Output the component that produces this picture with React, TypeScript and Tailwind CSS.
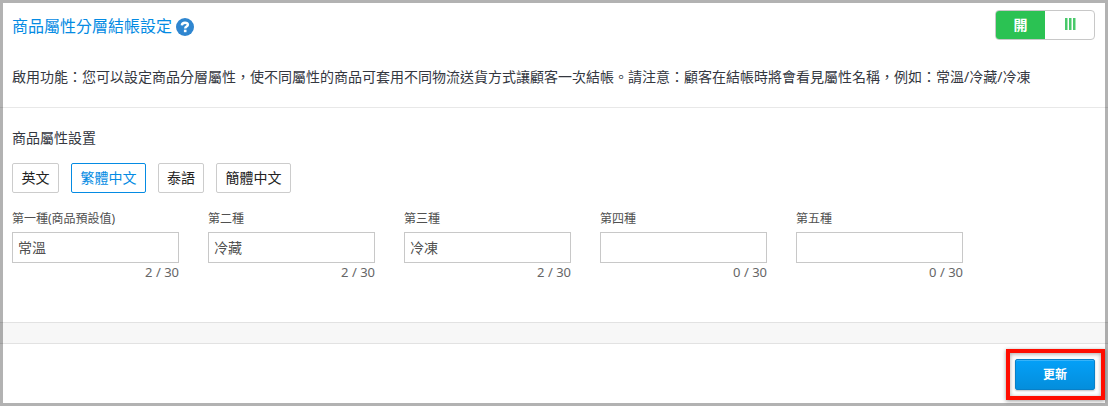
const languages = [
  { label: "英文", width: "w-[47px]" },
  { label: "繁體中文", width: "w-[75px]", active: true },
  { label: "泰語", width: "w-[46px]" },
  { label: "簡體中文", width: "w-[75px]" },
]

const attributes = [
  { label: "第一種(商品預設值)", value: "常溫" },
  { label: "第二種", value: "冷藏" },
  { label: "第三種", value: "冷凍" },
  { label: "第四種", value: "" },
  { label: "第五種", value: "" },
]

function HelpIcon() {
  return (
    <svg className="w-[18px] h-[18px]" viewBox="0 0 18 18" fill="none">
      <circle cx="9" cy="9" r="9" fill="#2f86d0" />
      <path d="M5.8 7.3C6 5.4 7.2 4.7 9 4.7C10.9 4.7 11.9 5.5 11.9 6.8C11.9 8.7 9.2 8.5 9.2 10.5" stroke="#fff" strokeWidth="2.4" />
      <rect x="7.9" y="11.7" width="2.6" height="2.5" fill="#fff" />
    </svg>
  )
}

function Toggle() {
  return (
    <button className="flex w-[100px] h-[30px] rounded-[4px] border border-[#c8c8c8] overflow-hidden">
      <span className="w-[49px] h-full bg-[#2bc253] text-white text-[14px] font-bold leading-[28px] text-center">開</span>
      <span className="flex-1 h-full flex items-center justify-center gap-px pl-px pb-[3px]">
        <span className="w-[3px] h-3 bg-[#48c96a] border-r border-[#a5e4b5]" />
        <span className="w-[3px] h-3 bg-[#48c96a] border-r border-[#a5e4b5]" />
        <span className="w-[3px] h-3 bg-[#48c96a] border-r border-[#a5e4b5]" />
      </span>
    </button>
  )
}

export default function App() {
  return (
    <div
      lang="zh-Hant"
      className="relative w-[1108px] h-[406px] flex flex-col overflow-hidden bg-white text-[14px] text-[#34373f] font-['Noto_Sans','Noto_Sans_CJK_TC',sans-serif]"
    >
      {/* Header */}
      <section className="h-[108px] shrink-0 border-b border-[#e8e8e8] px-3 pt-[10px]">
        <div className="flex justify-between pr-px">
          <h2 className="flex items-center gap-1 h-[34px] text-[16px] text-[#048be3]">
            <span className="leading-[32px] pb-[2px]">商品屬性分層結帳設定</span>
            <HelpIcon />
          </h2>
          <Toggle />
        </div>
        <p className="mt-[23px] leading-5 whitespace-nowrap">
          啟用功能：您可以設定商品分層屬性，使不同屬性的商品可套用不同物流送貨方式讓顧客一次結帳。請注意：顧客在結帳時將會看見屬性名稱，例如：常溫/冷藏/冷凍
        </p>
      </section>

      {/* Attribute settings */}
      <section className="h-[214px] shrink-0 px-3 pt-5">
        <h3 className="leading-5">商品屬性設置</h3>
        <div className="flex gap-3 mt-[15px]">
          {languages.map((lang) => (
            <button
              key={lang.label}
              className={`${lang.width} h-[30px] rounded-[2px] border leading-[28px] whitespace-nowrap ${
                lang.active ? "border-[#048be3] text-[#048be3]" : "border-[#ccc] text-[#222]"
              }`}
            >
              {lang.label}
            </button>
          ))}
        </div>
        <div className="flex gap-[29px] mt-[17px]">
          {attributes.map((attr) => (
            <label key={attr.label} className="block w-[167px] text-[#505050]">
              <span className="block h-[22px] text-[12px] leading-[18px]">{attr.label}</span>
              <input
                className="block w-full h-[31px] border border-[#c8c8c8] px-[5px] pb-[2px] text-[14px] outline-none"
                defaultValue={attr.value}
              />
              <span className="block text-right text-[13px] leading-[18px] text-[#666]">{attr.value.length} / 30</span>
            </label>
          ))}
        </div>
      </section>

      <div className="h-[22px] shrink-0 bg-[#f7f7f7] border-y border-[#e2e2e2]" />

      {/* Frame */}
      <div className="absolute inset-0 border-[3px] border-black/30 pointer-events-none" />

      {/* Footer */}
      <footer className="relative flex-1 flex justify-end items-start pt-[5px] pr-[3px]">
        <div className="w-[99px] h-[51px] border-4 border-[#ff0d00] pt-[6px] pl-[5px] shadow-[0_1px_4px_rgba(0,0,0,0.4),inset_0_1px_4px_rgba(0,0,0,0.35)]">
          <button className="block w-[80px] h-[31px] rounded-[2px] border border-[#0880c8] bg-linear-to-b from-[#04a0f8] to-[#048edc] text-white text-[12px] font-bold leading-[29px] shadow-[inset_0_1px_0_rgba(255,255,255,0.2),0_1px_2px_rgba(0,0,0,0.25)]">
            更新
          </button>
        </div>
      </footer>
    </div>
  )
}
